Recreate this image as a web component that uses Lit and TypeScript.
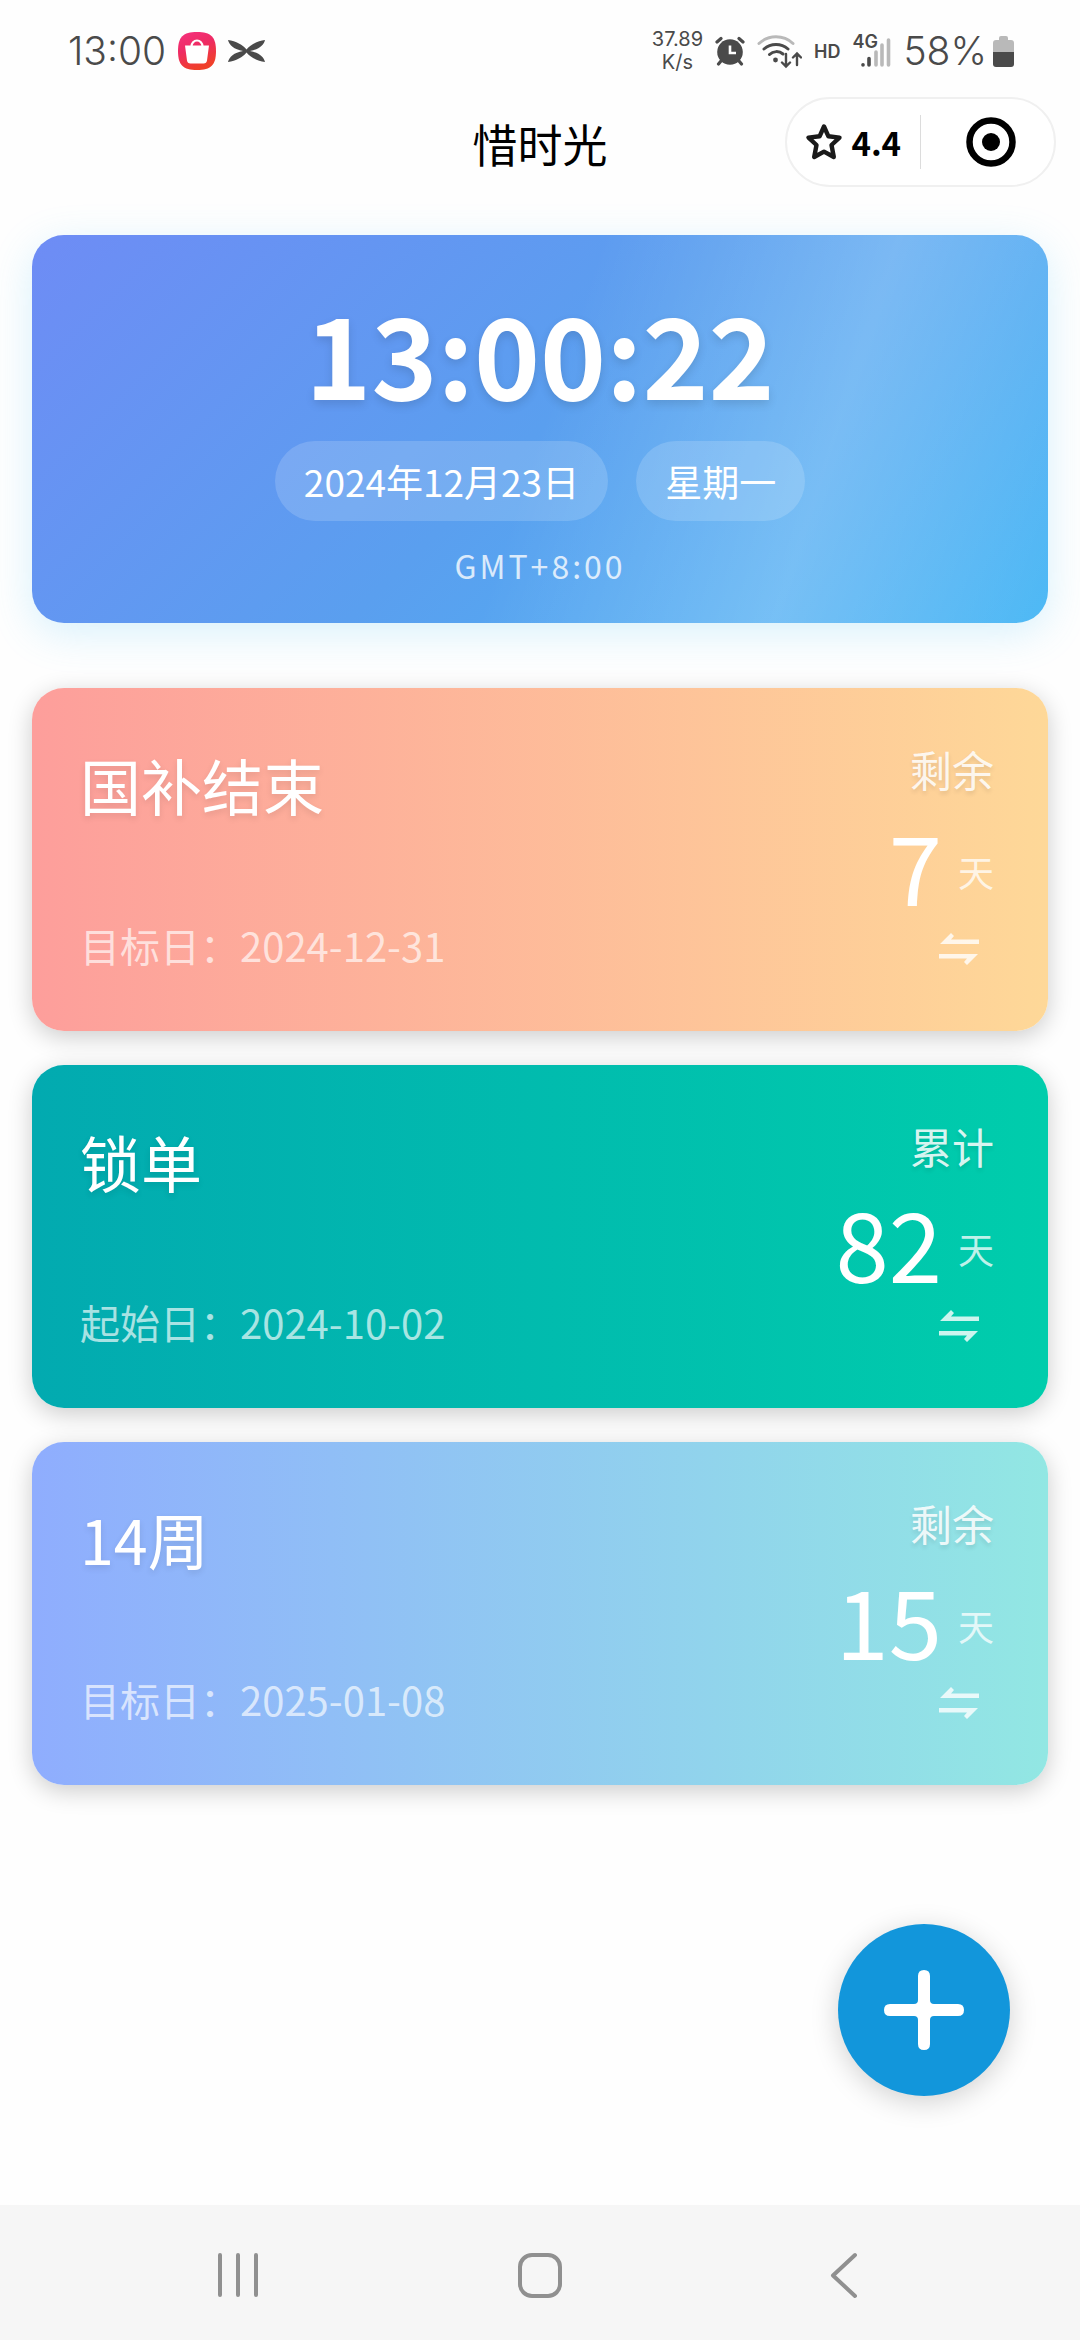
import { LitElement, html, css, svg } from "lit";
import { customElement, property } from "lit/decorators.js";
import { classMap } from "lit/directives/class-map.js";

interface Countdown {
  title: string;
  dateLabel: string;
  date: string;
  status: string;
  days: number;
  theme: "peach" | "teal" | "sky";
}

const EVENTS: Countdown[] = [
  { title: "国补结束", dateLabel: "目标日", date: "2024-12-31", status: "剩余", days: 7, theme: "peach" },
  { title: "锁单", dateLabel: "起始日", date: "2024-10-02", status: "累计", days: 82, theme: "teal" },
  { title: "14周", dateLabel: "目标日", date: "2025-01-08", status: "剩余", days: 15, theme: "sky" },
];

const reset = css`
  *,
  *::before,
  *::after {
    box-sizing: border-box;
  }
  button {
    margin: 0;
    padding: 0;
    border: 0;
    background: none;
    color: inherit;
    font: inherit;
    cursor: pointer;
  }
  svg {
    display: block;
  }
  h1,
  h2,
  p {
    margin: 0;
    font-weight: 400;
  }
`;

@customElement("status-bar")
export class StatusBar extends LitElement {
  static styles = [
    reset,
    css`
      :host {
        box-sizing: border-box;
        display: flex;
        align-items: center;
        justify-content: space-between;
        height: 97px;
        padding: 5px 66px 0 68px;
        color: #4a4a4a;
        font-family: Inter, "Liberation Sans", sans-serif;
      }
      .group {
        display: flex;
        align-items: center;
      }
      .left {
        gap: 12px;
      }
      .right {
        gap: 12px;
      }
      .big {
        font-size: 39px;
        font-weight: 300;
        line-height: 44px;
      }
      .speed {
        font-size: 20px;
        line-height: 23px;
        text-align: center;
      }
      .hd {
        font-size: 18px;
        font-weight: 600;
      }
      .signal {
        display: grid;
        width: 39px;
        height: 34px;
      }
      .signal > * {
        grid-area: 1 / 1;
      }
      .net {
        font-size: 18px;
        font-weight: 600;
        line-height: 16px;
      }
      .battery {
        margin-left: -6px;
      }
    `,
  ];

  render() {
    return html`
      <div class="group left">
        <span class="big">13:00</span>
        <svg width="38" height="38" viewBox="0 0 38 38" aria-hidden="true">
          <defs>
            <linearGradient id="shop" x1="0" y1="0" x2="0.4" y2="1">
              <stop offset="0" stop-color="#f5317f" />
              <stop offset="0.5" stop-color="#ee2b62" />
              <stop offset="1" stop-color="#f0402a" />
            </linearGradient>
          </defs>
          <path d="M19 0C33 0 38 5 38 19S33 38 19 38 0 33 0 19 5 0 19 0Z" fill="url(#shop)" />
          <path d="M13.500 14.500a5.500 6 0 0 1 11 0" fill="none" stroke="#fff" stroke-width="2.200" />
          <path d="M7 13.500H31L29 28.500Q28.600 31.500 25.600 31.500H12.400Q9.400 31.500 9 28.500Z" fill="#fff" />
        </svg>
        <svg width="37" height="22" viewBox="0 0 37 22" aria-hidden="true">
          <path
            fill="#4a4a4a"
            d="M0 0C8 1 15 5 18.500 9.500C22 5 29 1 37 0C36 5 31 9.500 22 11C31 12.500 36 17 37 22C29 21 22 17 18.500 12.500C15 17 8 21 0 22C1 17 6 12.500 15 11C6 9.500 1 5 0 0Z"
          />
        </svg>
      </div>
      <div class="group right">
        <span class="speed">37.89<br />K/s</span>
        <svg width="30" height="30" viewBox="0 0 30 30" aria-hidden="true">
          <circle cx="15" cy="16" r="12.800" fill="#4a4a4a" />
          <path d="M2 6 6 2.500M28 6 24 2.500M6 25 3.500 28M24 25l2.500 3" stroke="#4a4a4a" stroke-width="3.200" stroke-linecap="round" />
          <path d="M15 9.500V17h6" fill="none" stroke="#fff" stroke-width="2.600" />
        </svg>
        <svg width="45" height="35" viewBox="0 0 45 35" fill="none" stroke-width="3" stroke-linecap="round" aria-hidden="true">
          <path d="M2 9.500A25 25 0 0 1 36 9.500" stroke="#b9b9b9" />
          <path d="M7 15A18 18 0 0 1 31 15M12.500 20.500a10 10 0 0 1 13.500-.5" stroke="#4a4a4a" />
          <circle cx="18.500" cy="26" r="2.400" fill="#4a4a4a" />
          <path d="M29 20V32M25 28.500 29 32.500 33 28.500M40 31V20M36 23.500 40 19.500 44 23.500" stroke="#4a4a4a" stroke-width="2.400" />
        </svg>
        <span class="hd">HD</span>
        <span class="signal">
          <svg width="39" height="34" viewBox="0 0 39 34" aria-hidden="true">
            <g stroke-width="3.600" stroke-linecap="round">
              <path d="M11 30.800v.2M17 24.500V31" stroke="#4a4a4a" />
              <path d="M24 18V31M30 11V31M36.500 6V31" stroke="#b9b9b9" />
            </g>
          </svg>
          <span class="net">4G</span>
        </span>
        <span class="big">58%</span>
        <svg class="battery" width="21" height="31" viewBox="0 0 21 31" aria-hidden="true">
          <path d="M6 4V2Q6 0 8 0H13Q15 0 15 2V4H18Q21 4 21 7V16H0V7Q0 4 3 4Z" fill="#b9b9b9" />
          <path d="M0 16H21V28Q21 31 18 31H3Q0 31 0 28Z" fill="#4a4a4a" />
        </svg>
      </div>
    `;
  }
}

@customElement("title-bar")
export class TitleBar extends LitElement {
  static styles = [
    reset,
    css`
      :host {
        display: grid;
        grid-template-columns: 1fr auto 1fr;
        align-items: center;
        padding: 0 24px;
      }
      .title {
        grid-column: 2;
        padding-top: 4px;
        font-size: 45px;
        line-height: 64px;
        color: #000;
      }
      .capsule {
        display: grid;
        grid-template-columns: 1fr 1fr;
        align-items: center;
        justify-self: end;
        width: 271px;
        height: 90px;
        border: 2px solid #f0f0f0;
        border-radius: 45px;
        background: #fff;
      }
      .rate {
        display: flex;
        align-items: center;
        justify-content: center;
        gap: 8px;
        height: 54px;
        border-right: 1px solid #dcdcdc;
        font-size: 33px;
        font-weight: 700;
        line-height: 40px;
        color: #000;
      }
      .close {
        display: flex;
        justify-content: center;
        padding-left: 8px;
      }
    `,
  ];

  render() {
    return html`
      <h1 class="title">惜时光</h1>
      <div class="capsule">
        <button class="rate" type="button">
          <svg width="38" height="38" viewBox="0 0 38 38" aria-hidden="true">
            <path
              d="M19 3.500 23.300 13.200 34.500 14.600 26.500 22 28.800 34 19 28.600 9.200 34 11.500 22 3.500 14.600 14.700 13.200Z"
              fill="none"
              stroke="#1a1a1a"
              stroke-width="4.400"
              stroke-linejoin="round"
            />
          </svg>
          <span>4.4</span>
        </button>
        <button class="close" type="button" aria-label="关闭">
          <svg width="50" height="50" viewBox="0 0 50 50" aria-hidden="true">
            <circle cx="25" cy="25" r="21.500" fill="none" stroke="#000" stroke-width="6.500" />
            <circle cx="25" cy="25" r="9" fill="#000" />
          </svg>
        </button>
      </div>
    `;
  }
}

@customElement("clock-card")
export class ClockCard extends LitElement {
  static styles = [
    reset,
    css`
      :host {
        display: flex;
        flex-direction: column;
        align-items: center;
        padding: 56px 32px 35px;
        border-radius: 32px;
        color: #fff;
        background:
          linear-gradient(108deg, rgba(255, 255, 255, 0) 50%, rgba(255, 255, 255, 0.22) 76%, rgba(255, 255, 255, 0) 102%),
          linear-gradient(135deg, #6e8cf5 0%, #5a9fef 50%, #4ab8f5 100%);
        box-shadow: 0 10px 40px rgba(79, 195, 247, 0.22);
      }
      .time {
        font-size: 112px;
        font-weight: 700;
        line-height: 120px;
        text-shadow: 0 4px 10px rgba(0, 0, 0, 0.12);
      }
      .chips {
        display: flex;
        gap: 28px;
        margin-top: 30px;
      }
      .chip {
        padding: 12px 29px;
        border-radius: 40px;
        background: rgba(255, 255, 255, 0.16);
        font-size: 37px;
        line-height: 56px;
      }
      .zone {
        margin-top: 21px;
        font-size: 32px;
        line-height: 46px;
        letter-spacing: 3px;
        opacity: 0.78;
      }
    `,
  ];

  render() {
    return html`
      <time class="time">13:00:22</time>
      <div class="chips">
        <span class="chip">2024年12月23日</span>
        <span class="chip">星期一</span>
      </div>
      <span class="zone">GMT+8:00</span>
    `;
  }
}

@customElement("countdown-card")
export class CountdownCard extends LitElement {
  @property({ attribute: false }) event!: Countdown;

  static styles = [
    reset,
    css`
      :host {
        display: block;
      }
      .card {
        display: flex;
        justify-content: space-between;
        min-height: 343px;
        padding: 51px 54px 56px 48px;
        border-radius: 32px;
        color: #fff;
        box-shadow: 0 6px 24px rgba(0, 0, 0, 0.2);
      }
      .peach {
        background: linear-gradient(90deg, #fd9e9b, #fed898);
      }
      .teal {
        background: linear-gradient(90deg, #02aab0, #00cdac);
      }
      .sky {
        background: linear-gradient(90deg, #8fadfe, #92e7e3);
      }
      .info,
      .count {
        display: flex;
        flex-direction: column;
      }
      .info {
        justify-content: space-between;
      }
      .count {
        align-items: flex-end;
      }
      .title {
        font-size: 61px;
        line-height: 92px;
        text-shadow: 0 3px 6px rgba(0, 0, 0, 0.1);
      }
      .date {
        font-size: 40px;
        line-height: 60px;
        color: rgba(255, 255, 255, 0.66);
      }
      .status {
        font-size: 42px;
        line-height: 60px;
        color: rgba(255, 255, 255, 0.86);
        text-shadow: 0 3px 4px rgba(0, 0, 0, 0.1);
      }
      .days {
        display: flex;
        align-items: center;
        gap: 16px;
        margin: 16px 0 8px;
      }
      .number {
        font-size: 96px;
        line-height: 100px;
      }
      .unit {
        padding-top: 12px;
        font-size: 36px;
        line-height: 52px;
        color: rgba(255, 255, 255, 0.76);
      }
      .swap {
        padding: 10px 15px;
        color: rgba(255, 255, 255, 0.8);
      }
    `,
  ];

  render() {
    const e = this.event;
    return html`
      <article class=${classMap({ card: true, [e.theme]: true })}>
        <div class="info">
          <h2 class="title">${e.title}</h2>
          <p class="date">${e.dateLabel}：${e.date}</p>
        </div>
        <div class="count">
          <span class="status">${e.status}</span>
          <div class="days">
            <span class="number">${e.days}</span>
            <span class="unit">天</span>
          </div>
          <button class="swap" type="button" aria-label="切换">
            <svg width="40" height="32" viewBox="0 0 40 32" fill="currentColor" aria-hidden="true">
              <path d="M1 11 12 0 15 3 12 6.500H40V11ZM39 21 28 32 25 29 28 25.500H0V21Z" />
            </svg>
          </button>
        </div>
      </article>
    `;
  }
}

const NAV_ICONS = [
  { label: "最近任务", shape: svg`<path d="M5 4V44M23 4V44M41 4V44" />` },
  { label: "主页", shape: svg`<rect x="3" y="4" width="40" height="41" rx="12" />` },
  { label: "返回", shape: svg`<path d="M36 4 14 24.500 36 45" />` },
];

@customElement("nav-bar")
export class NavBar extends LitElement {
  static styles = [
    reset,
    css`
      :host {
        box-sizing: border-box;
        display: grid;
        grid-template-columns: repeat(3, 1fr);
        align-items: center;
        height: 135px;
        padding: 4px 8% 0;
        background: #f6f6f6;
      }
      .key {
        display: flex;
        justify-content: center;
      }
    `,
  ];

  render() {
    return NAV_ICONS.map(
      (icon) => html`
        <button class="key" type="button" aria-label=${icon.label}>
          <svg
            width="46"
            height="48"
            viewBox="0 0 46 48"
            fill="none"
            stroke="#909090"
            stroke-width="4"
            stroke-linecap="round"
            stroke-linejoin="round"
            aria-hidden="true"
          >
            ${icon.shape}
          </svg>
        </button>
      `,
    );
  }
}

@customElement("app-root")
export class AppRoot extends LitElement {
  static styles = [
    reset,
    css`
      :host {
        display: flex;
        flex-direction: column;
        min-height: 100vh;
        background: #fefefe;
        font-family: "Noto Sans CJK SC", sans-serif;
      }
      .content {
        display: flex;
        flex: 1;
        flex-direction: column;
        padding: 48px 32px 32px;
      }
      .list {
        display: flex;
        flex-direction: column;
        gap: 34px;
        margin-top: 65px;
      }
      .add {
        position: fixed;
        right: 70px;
        bottom: 244px;
        display: flex;
        align-items: center;
        justify-content: center;
        width: 172px;
        height: 172px;
        border-radius: 50%;
        background: #1296db;
        box-shadow: 0 6px 28px rgba(0, 0, 0, 0.18);
      }
    `,
  ];

  render() {
    return html`
      <status-bar></status-bar>
      <title-bar></title-bar>
      <main class="content">
        <clock-card></clock-card>
        <section class="list">
          ${EVENTS.map((e) => html`<countdown-card .event=${e}></countdown-card>`)}
        </section>
      </main>
      <button class="add" type="button" aria-label="添加">
        <svg width="80" height="80" viewBox="0 0 80 80" fill="#fff" aria-hidden="true">
          <path
            d="M40 0Q46 0 46 6V30Q46 34 50 34H74Q80 34 80 40T74 46H50Q46 46 46 50V74Q46 80 40 80T34 74V50Q34 46 30 46H6Q0 46 0 40T6 34H30Q34 34 34 30V6Q34 0 40 0Z"
          />
        </svg>
      </button>
      <nav-bar></nav-bar>
    `;
  }
}
